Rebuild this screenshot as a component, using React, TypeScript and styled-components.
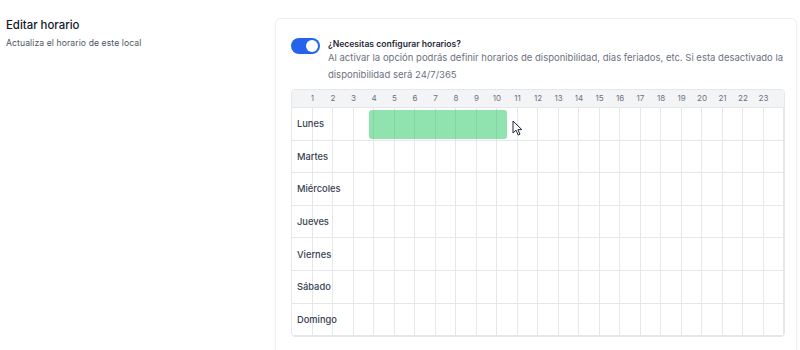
import React from "react";
import styled, { createGlobalStyle } from "styled-components";

const Global = createGlobalStyle`
  html, body { margin: 0; padding: 0; background: #ffffff; }
  body { font-family: Inter, "Noto Sans", "Liberation Sans", sans-serif; -webkit-font-smoothing: antialiased; }
  * { box-sizing: border-box; }
`;

const COL = 20.5;
const HOURS = 24;
const DAYS = ["Lunes", "Martes", "Miércoles", "Jueves", "Viernes", "Sábado", "Domingo"];

const Page = styled.div`
  display: flex;
  width: 800px;
  height: 350px;
  overflow: hidden;
`;

const Intro = styled.div`
  width: 275px;
  flex: none;
  padding: 17px 0 0 6px;
`;

const Heading = styled.h2`
  margin: 0;
  font-size: 11.4px;
  font-weight: 500;
  color: #111827;
  line-height: 16px;
`;

const Sub = styled.p`
  margin: 3px 0 0;
  font-size: 8.6px;
  color: #4b5563;
  line-height: 14px;
  letter-spacing: 0.1px;
`;

const Card = styled.section`
  margin-top: 18px;
  width: 522px;
  height: 360px;
  border: 1px solid #f0f0f2;
  border-radius: 6px;
  box-shadow: 0 1px 3px rgba(0, 0, 0, 0.04);
  padding: 18px 0 0 15px;
`;

const ToggleRow = styled.div`
  display: flex;
  gap: 8px;
  align-items: flex-start;
`;

const Switch = styled.div<{ $on: boolean }>`
  flex: none;
  width: 29px;
  height: 16px;
  margin-top: 1px;
  border-radius: 8px;
  background: ${(p) => (p.$on ? "#2563eb" : "#d1d5db")};
  position: relative;
  &::after {
    content: "";
    position: absolute;
    top: 2px;
    left: ${(p) => (p.$on ? "15px" : "2px")};
    width: 12px;
    height: 12px;
    border-radius: 50%;
    background: #fff;
  }
`;

const ToggleText = styled.div`
  display: flex;
  flex-direction: column;
`;

const ToggleTitle = styled.div`
  font-size: 8.6px;
  font-weight: 600;
  color: #1f2937;
  line-height: 14px;
`;

const ToggleDesc = styled.div`
  font-size: 9.5px;
  color: #6b7280;
  line-height: 17px;
  margin-top: -2px;
  width: 462px;
`;

const Grid = styled.div`
  margin-top: 6px;
  width: ${COL * HOURS + 2}px;
  border: 1px solid #e5e7eb;
  border-radius: 4px;
  overflow: hidden;
`;

const Header = styled.div`
  display: flex;
  height: 18px;
  background: #f3f4f6;
  border-bottom: 1px solid #e5e7eb;
  padding-left: ${COL / 2}px;
`;

const HourLabel = styled.div`
  width: ${COL}px;
  flex: none;
  text-align: center;
  font-size: 8px;
  line-height: 17px;
  color: #6b7280;
`;

const Row = styled.div`
  position: relative;
  display: grid;
  grid-template-columns: repeat(${HOURS}, ${COL}px);
  height: 32.6px;
  border-bottom: 1px solid #e5e7eb;
`;

const Cell = styled.div`
  border-right: 1px solid #e5e7eb;
  &:last-child { border-right: none; }
`;

const DayLabel = styled.span`
  position: absolute;
  left: 5px;
  top: 0;
  bottom: 0;
  display: flex;
  align-items: center;
  font-size: 9.3px;
  font-weight: 500;
  color: #374151;
  pointer-events: none;
`;

const Block = styled.div`
  position: absolute;
  top: 1.5px;
  height: 29px;
  border-radius: 3px;
  background: rgba(34, 197, 94, 0.5);
`;

const Cursor = styled.svg`
  position: absolute;
  top: 12px;
  left: 220px;
`;

export default function App() {
  return (
    <>
      <Global />
      <Page>
        <Intro>
          <Heading>Editar horario</Heading>
          <Sub>Actualiza el horario de este local</Sub>
        </Intro>
        <Card>
          <ToggleRow>
            <Switch $on />
            <ToggleText>
              <ToggleTitle>¿Necesitas configurar horarios?</ToggleTitle>
              <ToggleDesc>
                Al activar la opción podrás definir horarios de disponibilidad, dias feriados, etc. Si esta
                desactivado la disponibilidad será 24/7/365
              </ToggleDesc>
            </ToggleText>
          </ToggleRow>
          <Grid>
            <Header>
              {Array.from({ length: HOURS - 1 }, (_, i) => (
                <HourLabel key={i}>{i + 1}</HourLabel>
              ))}
            </Header>
            {DAYS.map((d, r) => (
              <Row key={d}>
                {Array.from({ length: HOURS }, (_, i) => (
                  <Cell key={i} />
                ))}
                <DayLabel>{d}</DayLabel>
                {r === 0 && (
                  <>
                    <Block style={{ left: 77, width: 138 }} />
                    <Cursor width="11" height="16" viewBox="0 0 11 16">
                      <path
                        d="M1 1 L1 13 L4 10.2 L6.2 15 L8 14.2 L5.9 9.6 L9.8 9.6 Z"
                        fill="#ffffff"
                        stroke="#1f2937"
                        strokeWidth="1"
                        strokeLinejoin="round"
                      />
                    </Cursor>
                  </>
                )}
              </Row>
            ))}
          </Grid>
        </Card>
      </Page>
    </>
  );
}
